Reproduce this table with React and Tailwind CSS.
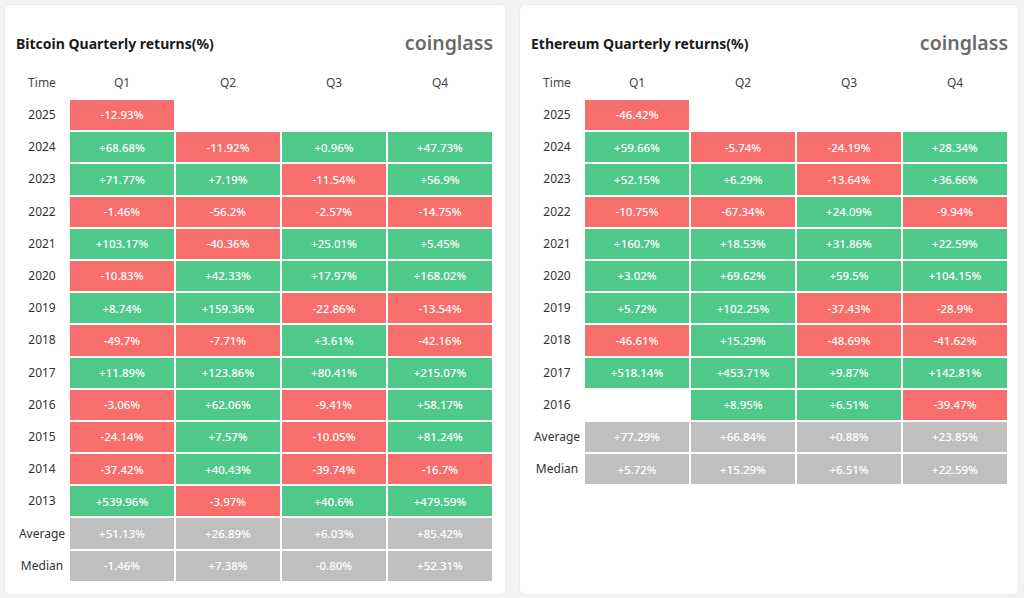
const btc = [
  ['2025', [-12.93, null, null, null]],
  ['2024', [68.68, -11.92, 0.96, 47.73]],
  ['2023', [71.77, 7.19, -11.54, 56.9]],
  ['2022', [-1.46, -56.2, -2.57, -14.75]],
  ['2021', [103.17, -40.36, 25.01, 5.45]],
  ['2020', [-10.83, 42.33, 17.97, 168.02]],
  ['2019', [8.74, 159.36, -22.86, -13.54]],
  ['2018', [-49.7, -7.71, 3.61, -42.16]],
  ['2017', [11.89, 123.86, 80.41, 215.07]],
  ['2016', [-3.06, 62.06, -9.41, 58.17]],
  ['2015', [-24.14, 7.57, -10.05, 81.24]],
  ['2014', [-37.42, 40.43, -39.74, -16.7]],
  ['2013', [539.96, -3.97, 40.6, 479.59]],
];
const btcStats = [
  ['Average', ['+51.13%', '+26.89%', '+6.03%', '+85.42%']],
  ['Median', ['-1.46%', '+7.38%', '-0.80%', '+52.31%']],
];

const eth = [
  ['2025', [-46.42, null, null, null]],
  ['2024', [59.66, -5.74, -24.19, 28.34]],
  ['2023', [52.15, 6.29, -13.64, 36.66]],
  ['2022', [-10.75, -67.34, 24.09, -9.94]],
  ['2021', [160.7, 18.53, 31.86, 22.59]],
  ['2020', [3.02, 69.62, 59.5, 104.15]],
  ['2019', [5.72, 102.25, -37.43, -28.9]],
  ['2018', [-46.61, 15.29, -48.69, -41.62]],
  ['2017', [518.14, 453.71, 9.87, 142.81]],
  ['2016', [null, 8.95, 6.51, -39.47]],
];
const ethStats = [
  ['Average', ['+77.29%', '+66.84%', '+0.88%', '+23.85%']],
  ['Median', ['+5.72%', '+15.29%', '+6.51%', '+22.59%']],
];

function fmt(v) {
  return (v > 0 ? '+' : '') + v + '%';
}

function Card({ title, rows, stats, width }) {
  return (
    <div className={`${width} h-[591px] bg-white rounded-md border border-[#ececec] pt-[28px] pl-[11px]`}>
      <div className="flex items-center justify-between h-[20px] w-[477px]">
        <div className="text-[14px] font-bold text-[#1a1a1a]">{title}</div>
        <div className="text-[19.5px] font-semibold text-[#6a6a6a] leading-none">coinglass</div>
      </div>
      <div className="mt-[15px] grid grid-cols-[52px_104px_104px_104px_104px] gap-x-[2px] gap-y-[2px] text-[12px]">
        <div className="h-[30px] flex items-center justify-center text-[#444]">Time</div>
        {['Q1', 'Q2', 'Q3', 'Q4'].map((q) => (
          <div key={q} className="h-[30px] flex items-center justify-center text-[#444]">{q}</div>
        ))}
        {rows.map(([year, vals]) => (
          <Row key={year} label={year} vals={vals} />
        ))}
        {stats.map(([label, vals]) => (
          <StatRow key={label} label={label} vals={vals} />
        ))}
      </div>
    </div>
  );
}

function Row({ label, vals }) {
  return (
    <>
      <div className="h-[30.2px] flex items-center justify-center text-[#333]">{label}</div>
      {vals.map((v, i) =>
        v === null ? (
          <div key={i} className="h-[30.2px]" />
        ) : (
          <div
            key={i}
            className={`h-[30.2px] flex items-center justify-center text-white text-[11.5px] font-medium ${
              v < 0 ? 'bg-[#f86e6d]' : 'bg-[#4fc98a]'
            }`}
          >
            {fmt(v)}
          </div>
        )
      )}
    </>
  );
}

function StatRow({ label, vals }) {
  return (
    <>
      <div className="h-[30.2px] flex items-center justify-center text-[#333]">{label}</div>
      {vals.map((v, i) => (
        <div key={i} className="h-[30.2px] flex items-center justify-center text-white text-[11.5px] font-medium bg-[#bfbfbf]">
          {v}
        </div>
      ))}
    </>
  );
}

export default function App() {
  return (
    <div className="w-[1024px] h-[598px] bg-[#f3f3f3] flex gap-[13px] pt-[4px] pl-[4px] font-['Noto_Sans',sans-serif]">
      <Card title="Bitcoin Quarterly returns(%)" rows={btc} stats={btcStats} width="w-[502px]" />
      <Card title="Ethereum Quarterly returns(%)" rows={eth} stats={ethStats} width="w-[500px]" />
    </div>
  );
}
